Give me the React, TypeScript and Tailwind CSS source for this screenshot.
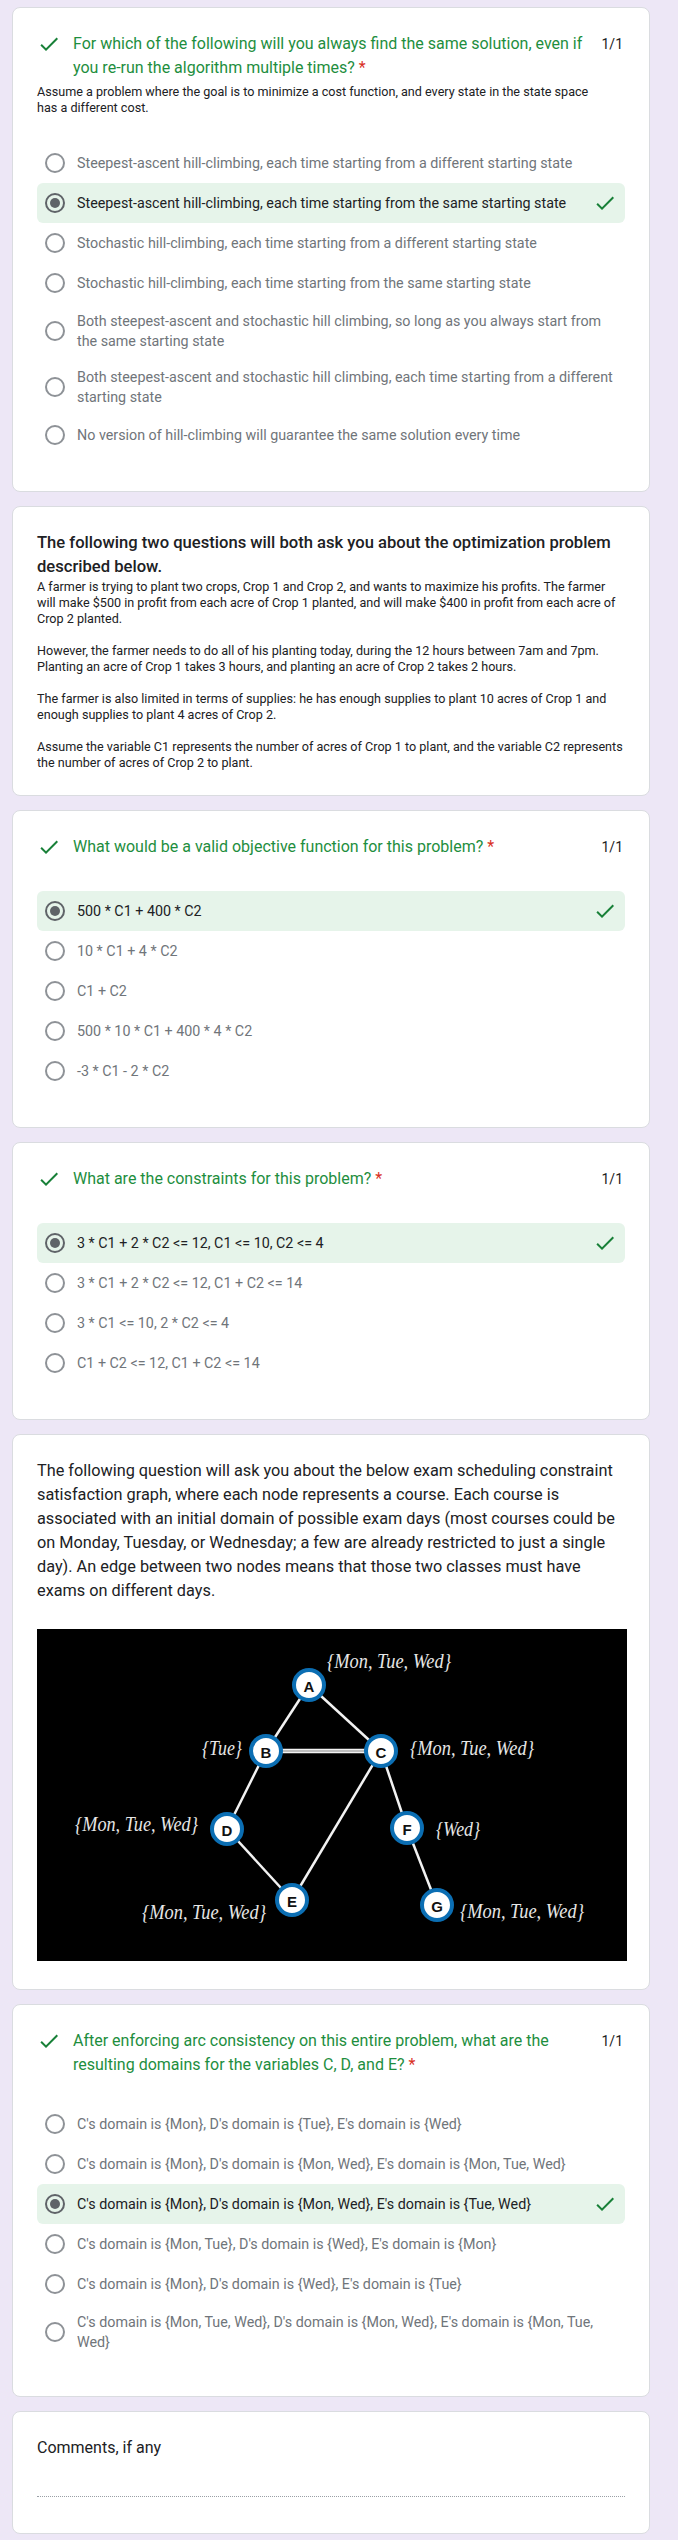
import React from 'react';

type Q = {
  title: string;
  desc?: string;
  options: string[];
  picked: number;
  gap: string;
};

const CheckIcon = ({ className }: { className?: string }) => (
  <svg viewBox="0 0 24 24" className={className} fill="#188038">
    <path d="M9 16.17L4.83 12l-1.42 1.41L9 19 21 7l-1.41-1.41z" />
  </svg>
);

function Card({ children, className = '' }: { children: React.ReactNode; className?: string }) {
  return (
    <div className={`w-[638px] rounded-lg border border-[#dadce0] bg-white px-6 ${className}`}>
      {children}
    </div>
  );
}

function Question({ q }: { q: Q }) {
  return (
    <Card className="pt-6 pb-9">
      <div className="flex items-start">
        <CheckIcon className="h-6 w-6 shrink-0" />
        <div className="ml-3 flex-1 text-[16px] leading-6 text-[#1e8e3e]">
          {q.title} <span className="text-[#d93025]">*</span>
        </div>
        <div className="ml-2 shrink-0 pr-[2px] text-[14px] leading-6 text-[#202124]">1/1</div>
      </div>
      {q.desc && (
        <div className="mt-[4px] whitespace-pre text-[12.6px] leading-4 text-[#202124]">{q.desc}</div>
      )}
      <div className={`flex flex-col ${q.gap}`}>
        {q.options.map((o, i) => {
          const sel = i === q.picked;
          return (
            <div
              key={i}
              className={`flex min-h-[40px] items-center rounded-md px-2 py-2 ${sel ? 'bg-[#e6f4ea]' : ''}`}
            >
              <div
                className={`flex h-5 w-5 shrink-0 items-center justify-center rounded-full border-2 ${sel ? 'border-[#5f6368]' : 'border-[#8e9297]'}`}
              >
                {sel && <div className="h-[10px] w-[10px] rounded-full bg-[#5f6368]" />}
              </div>
              <div
                className={`ml-3 flex-1 whitespace-pre-line text-[14.3px] leading-5 ${sel ? 'text-[#202124]' : 'text-[#70757a]'}`}
              >
                {o}
              </div>
              {sel && <CheckIcon className="ml-2 h-6 w-6 shrink-0" />}
            </div>
          );
        })}
      </div>
    </Card>
  );
}

const q1: Q = {
  title: 'For which of the following will you always find the same solution, even if you re-run the algorithm multiple times?',
  desc: 'Assume a problem where the goal is to minimize a cost function, and every state in the state space\nhas a different cost.',
  options: [
    'Steepest-ascent hill-climbing, each time starting from a different starting state',
    'Steepest-ascent hill-climbing, each time starting from the same starting state',
    'Stochastic hill-climbing, each time starting from a different starting state',
    'Stochastic hill-climbing, each time starting from the same starting state',
    'Both steepest-ascent and stochastic hill climbing, so long as you always start from\nthe same starting state',
    'Both steepest-ascent and stochastic hill climbing, each time starting from a different\nstarting state',
    'No version of hill-climbing will guarantee the same solution every time',
  ],
  picked: 1,
  gap: 'mt-[27px]',
};

const q2: Q = {
  title: 'What would be a valid objective function for this problem?',
  options: ['500 * C1 + 400 * C2', '10 * C1 + 4 * C2', 'C1 + C2', '500 * 10 * C1 + 400 * 4 * C2', '-3 * C1 - 2 * C2'],
  picked: 0,
  gap: 'mt-8',
};

const q3: Q = {
  title: 'What are the constraints for this problem?',
  options: [
    '3 * C1 + 2 * C2 <= 12, C1 <= 10, C2 <= 4',
    '3 * C1 + 2 * C2 <= 12, C1 + C2 <= 14',
    '3 * C1 <= 10, 2 * C2 <= 4',
    'C1 + C2 <= 12, C1 + C2 <= 14',
  ],
  picked: 0,
  gap: 'mt-8',
};

const q4: Q = {
  title: 'After enforcing arc consistency on this entire problem, what are the resulting domains for the variables C, D, and E?',
  options: [
    "C's domain is {Mon}, D's domain is {Tue}, E's domain is {Wed}",
    "C's domain is {Mon}, D's domain is {Mon, Wed}, E's domain is {Mon, Tue, Wed}",
    "C's domain is {Mon}, D's domain is {Mon, Wed}, E's domain is {Tue, Wed}",
    "C's domain is {Mon, Tue}, D's domain is {Wed}, E's domain is {Mon}",
    "C's domain is {Mon}, D's domain is {Wed}, E's domain is {Tue}",
    "C's domain is {Mon, Tue, Wed}, D's domain is {Mon, Wed}, E's domain is {Mon, Tue,\nWed}",
  ],
  picked: 2,
  gap: 'mt-[27px]',
};

const farmer = `A farmer is trying to plant two crops, Crop 1 and Crop 2, and wants to maximize his profits. The farmer
will make $500 in profit from each acre of Crop 1 planted, and will make $400 in profit from each acre of
Crop 2 planted.

However, the farmer needs to do all of his planting today, during the 12 hours between 7am and 7pm.
Planting an acre of Crop 1 takes 3 hours, and planting an acre of Crop 2 takes 2 hours.

The farmer is also limited in terms of supplies: he has enough supplies to plant 10 acres of Crop 1 and
enough supplies to plant 4 acres of Crop 2.

Assume the variable C1 represents the number of acres of Crop 1 to plant, and the variable C2 represents
the number of acres of Crop 2 to plant.`;

const examText = `The following question will ask you about the below exam scheduling constraint
satisfaction graph, where each node represents a course. Each course is
associated with an initial domain of possible exam days (most courses could be
on Monday, Tuesday, or Wednesday; a few are already restricted to just a single
day). An edge between two nodes means that those two classes must have
exams on different days.`;

const nodes: Record<string, [number, number]> = {
  A: [272, 56],
  B: [229, 122],
  C: [344, 122],
  D: [190, 200],
  F: [370, 199],
  E: [255, 271],
  G: [400, 276],
};

const edges = [
  ['A', 'B'],
  ['A', 'C'],
  ['B', 'D'],
  ['C', 'E'],
  ['C', 'F'],
  ['D', 'E'],
  ['F', 'G'],
];

// x, y, width, text
const labels: [number, number, number, string][] = [
  [290, 32, 124, '{Mon, Tue, Wed}'],
  [165, 119, 40, '{Tue}'],
  [373, 119, 124, '{Mon, Tue, Wed}'],
  [38, 195, 123, '{Mon, Tue, Wed}'],
  [399, 200, 44, '{Wed}'],
  [105, 283, 124, '{Mon, Tue, Wed}'],
  [423, 282, 124, '{Mon, Tue, Wed}'],
];

function Graph() {
  return (
    <svg width="590" height="332" viewBox="0 0 590 332" className="block bg-black">
      {edges.map(([a, b]) => (
        <line
          key={a + b}
          x1={nodes[a][0]}
          y1={nodes[a][1]}
          x2={nodes[b][0]}
          y2={nodes[b][1]}
          stroke="#f2f2f2"
          strokeWidth="2.5"
        />
      ))}
      <line x1={nodes.B[0]} y1={122} x2={nodes.C[0]} y2={122} stroke="#f2f2f2" strokeWidth="4.5" />
      <line x1={nodes.B[0]} y1={122} x2={nodes.C[0]} y2={122} stroke="#8a8a8a" strokeWidth="1" />
      {Object.entries(nodes).map(([k, [x, y]]) => (
        <g key={k}>
          <circle cx={x} cy={y} r="15" fill="#fff" stroke="#0b6eb3" strokeWidth="4" />
          <text
            x={x}
            y={y + 1}
            textAnchor="middle"
            dominantBaseline="central"
            fontFamily="Liberation Sans, sans-serif"
            fontWeight="bold"
            fontSize="15"
            fill="#111"
          >
            {k}
          </text>
        </g>
      ))}
      {labels.map(([x, y, w, t], i) => (
        <text
          key={i}
          x={x}
          y={y}
          dominantBaseline="central"
          fontFamily="Liberation Serif, serif"
          fontStyle="italic"
          fontSize="20"
          fill="#e6e6e6"
          textLength={w}
          lengthAdjust="spacingAndGlyphs"
        >
          {t}
        </text>
      ))}
    </svg>
  );
}

export default function App() {
  return (
    <div className="min-h-screen bg-[#ede7f6] pt-[7px] pb-[18px] pl-[12px] font-['Roboto',sans-serif]">
      <div className="flex flex-col gap-[14px]">
        <Question q={q1} />

        <Card className="py-6">
          <div className="text-[16.6px] font-medium leading-6 text-[#202124]">
            The following two questions will both ask you about the optimization problem described below.
          </div>
          <div className="whitespace-pre text-[12.6px] leading-4 text-[#202124]">{farmer}</div>
        </Card>

        <Question q={q2} />
        <Question q={q3} />

        <Card className="pt-6 pb-[28px]">
          <div className="whitespace-pre-line text-[16.3px] leading-6 text-[#202124]">{examText}</div>
          <div className="mt-[26px]">
            <Graph />
          </div>
        </Card>

        <Question q={q4} />

        <Card className="pt-6 pb-9">
          <div className="text-[16px] leading-6 text-[#202124]">Comments, if any</div>
          <div className="mt-9 border-b border-dotted border-[#9aa0a6]" />
        </Card>
      </div>
    </div>
  );
}
